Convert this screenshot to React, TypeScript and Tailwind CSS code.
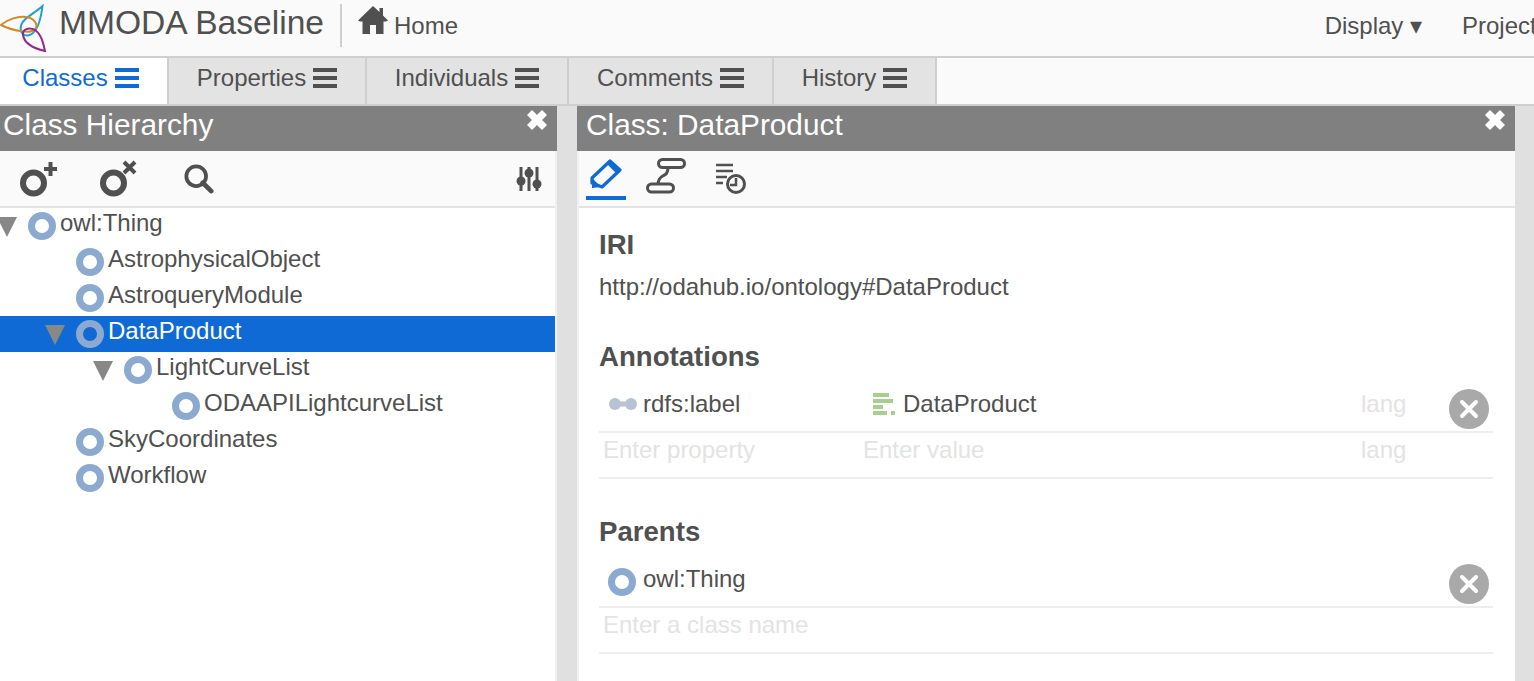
import React from "react";

function Logo() {
	return (
		<svg width="48" height="48" viewBox="0 0 48 48" fill="none" className="shrink-0">
			<path d="M42.5 2C41 14 38 30 28 31.5C20 32 18 22 25 15.5C30 11 37 7 42.5 2Z" stroke="#1e9fd2" strokeWidth="2" />
			<path d="M1 21C8 15 18 12 26 13C34 14 38 20 36 24C33 29 26 28 20 27C12 26 7 24 1 21Z" stroke="#d08a2a" strokeWidth="2" />
			<path d="M45 47C43 38 41 30 35 26C29 23 22 25 23 31C24 38 32 44 45 47Z" stroke="#93278f" strokeWidth="2" />
		</svg>
	);
}

function HomeIcon() {
	return (
		<svg width="30" height="30" viewBox="0 0 30 30" className="fill-[#505050]">
			<path d="M15 1L0 15.5L2 16.5H4.5V29H12V20H18V29H25.5V16.5H28L30 15.5L25 10.5V3H21.5V7L15 1Z" />
		</svg>
	);
}

function Bars() {
	return (
		<span className="ml-[7px] flex h-[20px] w-[24px] flex-col justify-between">
			<span className="h-[4px] bg-current" />
			<span className="h-[4px] bg-current" />
			<span className="h-[4px] bg-current" />
		</span>
	);
}

function Tab({ label, width, active }: { label: string; width: string; active?: boolean }) {
	return (
		<div
			className={
				active
					? `flex h-full items-center justify-center border-r-2 border-[#cfcfcf] bg-white pb-[6px] pr-[6px] text-[#0f6ad6] ${width}`
					: `flex h-full items-center justify-center border-r-2 border-[#cfcfcf] bg-[#e3e3e3] pb-[6px] text-[#505050] ${width}`
			}
		>
			{label}
			<Bars />
		</div>
	);
}

function CloseMark() {
	return (
		<svg width="20" height="20" viewBox="0 0 20 20" className="fill-white">
			<path d="M1 5L5 1L10 6L15 1L19 5L14 10L19 15L15 19L10 14L5 19L1 15L6 10Z" stroke="#fff" strokeWidth="1.5" strokeLinejoin="round" />
		</svg>
	);
}

function PanelHeading({ title, inset }: { title: string; inset: string }) {
	return (
		<div className={`flex h-[45px] items-start justify-between bg-[#808080] pr-[10px] pt-[1px] text-[29.8px] leading-[36px] text-white ${inset}`}>
			<span>{title}</span>
			<span className="pt-[3px]">
				<CloseMark />
			</span>
		</div>
	);
}

function ClassDot({ selected }: { selected?: boolean }) {
	return (
		<span
			className={
				selected
					? "block h-[28px] w-[28px] shrink-0 rounded-full border-[7px] border-[#8ca9d0] bg-[#0f6ad6]"
					: "block h-[28px] w-[28px] shrink-0 rounded-full border-[7px] border-[#8ca9d0] bg-white"
			}
		/>
	);
}

function Caret() {
	return (
		<svg width="20" height="20" viewBox="0 0 20 20" className="shrink-0 fill-[#888888]">
			<path d="M0 0H20L10 20Z" />
		</svg>
	);
}

type TreeRowProps = {
	label: string;
	indent: string;
	caret?: boolean;
	selected?: boolean;
};

function TreeRow({ label, indent, caret, selected }: TreeRowProps) {
	return (
		<div
			className={
				selected
					? `flex h-[36px] items-center bg-[#0f6ad6] text-white ${indent}`
					: `flex h-[36px] items-center text-[#505050] ${indent}`
			}
		>
			{caret && (
				<span className="mr-[11px] mt-[2px] block">
					<Caret />
				</span>
			)}
			<ClassDot selected={selected} />
			<span className="mb-[6px] ml-[4px] whitespace-nowrap">{label}</span>
		</div>
	);
}

function ClassToolIcon({ kind }: { kind: "add" | "remove" }) {
	return (
		<svg width="38" height="38" viewBox="0 0 38 38" fill="none" stroke="#505050">
			<circle cx="13.5" cy="23" r="10.5" strokeWidth="6" />
			{kind === "add" ? (
				<path d="M30.5 2V16M24 9H37" strokeWidth="4" />
			) : (
				<path d="M24 2L35 13M35 2L24 13" strokeWidth="4" />
			)}
		</svg>
	);
}

function RemoveButton() {
	return (
		<span className="flex h-[40px] w-[40px] items-center justify-center rounded-full bg-[#a9a9a9]">
			<svg width="22" height="22" viewBox="0 0 22 22" fill="none" stroke="#fff" strokeWidth="4" strokeLinecap="round">
				<path d="M4 4L18 18M18 4L4 18" />
			</svg>
		</span>
	);
}

function PropertyIcon() {
	return (
		<svg width="28" height="14" viewBox="0 0 28 14" className="fill-[#b8c2d2]">
			<circle cx="6" cy="7" r="6" />
			<circle cx="22" cy="7" r="6" />
			<rect x="6" y="4.5" width="16" height="5" />
		</svg>
	);
}

function LiteralIcon() {
	return (
		<svg width="22" height="22" viewBox="0 0 22 22" className="fill-[#a6cf91]">
			<rect x="0" y="0" width="16" height="4" />
			<rect x="0" y="6" width="20" height="4" />
			<rect x="0" y="12" width="10" height="4" />
			<rect x="0" y="18" width="14" height="4" />
			<rect x="18" y="18" width="4" height="4" />
		</svg>
	);
}

export default function App() {
	return (
		<div className="h-[681px] w-[1534px] overflow-hidden bg-white font-['Liberation_Sans',Arial,sans-serif] text-[24px] text-[#505050]">
			{/* Navbar */}
			<div className="flex h-[58px] items-center justify-between overflow-hidden border-b-2 border-[#cfcfcf] bg-[#fafafa]">
				<div className="flex h-full items-center">
					<Logo />
					<span className="ml-[11px] mb-[10px] text-[33.6px] leading-[48px]">MMODA Baseline</span>
					<span className="ml-[16px] mb-[6px] h-[43px] w-[2px] bg-[#cfcfcf]" />
					<span className="mb-[17px] ml-[16px]">
						<HomeIcon />
					</span>
					<span className="mb-[4px] ml-[6px]">Home</span>
				</div>
				<div className="mb-[4px] flex items-center whitespace-nowrap">
					<span>Display ▾</span>
					<span className="ml-[40px] w-[72px] overflow-hidden">Project</span>
				</div>
			</div>

			{/* Tabs */}
			<div className="flex h-[48px] border-b-2 border-[#cfcfcf] bg-[#fafafa]">
				<Tab label="Classes" width="w-[169px]" active />
				<Tab label="Properties" width="w-[198px]" />
				<Tab label="Individuals" width="w-[202px]" />
				<Tab label="Comments" width="w-[205px]" />
				<Tab label="History" width="w-[163px]" />
			</div>

			<div className="flex h-[575px]">
				{/* Class hierarchy */}
				<div className="w-[557px] shrink-0">
					<PanelHeading title="Class Hierarchy" inset="pl-[3px]" />
					<div className="h-[530px] border-r-2 border-[#f0f0f0]">
						<div className="flex h-[57px] items-center justify-between border-b-2 border-[#e3e3e3] bg-[#fafafa] pl-[20px] pr-[13px]">
							<div className="flex items-center">
								<ClassToolIcon kind="add" />
								<span className="ml-[42px]">
									<ClassToolIcon kind="remove" />
								</span>
								<svg width="30" height="30" viewBox="0 0 32 32" fill="none" stroke="#505050" className="ml-[46px] mt-[1px]">
									<circle cx="13" cy="13" r="10.5" strokeWidth="4" />
									<path d="M20 20L29 29" strokeWidth="5" strokeLinecap="round" />
								</svg>
							</div>
							<svg width="26" height="26" viewBox="0 0 26 26" className="fill-[#505050]">
								<rect x="3.5" y="1" width="3" height="24" />
								<rect x="11.5" y="1" width="3" height="24" />
								<rect x="19.5" y="1" width="3" height="24" />
								<circle cx="5" cy="15" r="4.5" />
								<circle cx="13" cy="7" r="4.5" />
								<circle cx="21" cy="18" r="4.5" />
							</svg>
						</div>
						<div>
							<TreeRow label="owl:Thing" indent="-ml-[3px]" caret />
							<TreeRow label="AstrophysicalObject" indent="pl-[76px]" />
							<TreeRow label="AstroqueryModule" indent="pl-[76px]" />
							<TreeRow label="DataProduct" indent="pl-[45px]" caret selected />
							<TreeRow label="LightCurveList" indent="pl-[93px]" caret />
							<TreeRow label="ODAAPILightcurveList" indent="pl-[172px]" />
							<TreeRow label="SkyCoordinates" indent="pl-[76px]" />
							<TreeRow label="Workflow" indent="pl-[76px]" />
						</div>
					</div>
				</div>

				{/* Splitter */}
				<div className="w-[20px] shrink-0 bg-[#e0e0e0]" />

				{/* Class details */}
				<div className="w-[938px] shrink-0">
					<PanelHeading title="Class: DataProduct" inset="pl-[9px]" />
					<div className="h-[530px] border-l-2 border-[#f0f0f0]">
						<div className="flex h-[57px] items-start border-b-2 border-[#e3e3e3] bg-[#fafafa] pl-[7px]">
							<div className="flex h-[49px] w-[40px] items-end justify-center border-b-[4px] border-[#0f6ad6] pb-[6px]">
								<svg width="32" height="32" viewBox="0 0 32 32" fill="none">
									<path d="M2 25L2 20L20 3L30 12L12 29Z" stroke="#0f6ad6" strokeWidth="3.2" strokeLinejoin="round" />
									<path d="M17 6L20 3L30 12L27 16Z" fill="#0f6ad6" />
									<path d="M2 20L11 29L2 30Z" fill="#0f6ad6" />
								</svg>
							</div>
							<svg width="40" height="36" viewBox="0 0 40 36" fill="none" stroke="#505050" strokeWidth="3" className="ml-[20px] mt-[7px]">
								<rect x="12.5" y="1.5" width="26" height="8" rx="4" />
								<rect x="1.5" y="26" width="26" height="8" rx="4" />
								<path d="M22 9.5C22 21 13 14 12 26" />
							</svg>
							<svg width="32" height="34" viewBox="0 0 32 34" fill="none" stroke="#505050" className="ml-[30px] mt-[12px]">
								<path d="M0 2H17M0 8H17M0 14H11M0 20H7" strokeWidth="2.5" />
								<circle cx="20" cy="21" r="8.5" strokeWidth="3" />
								<path d="M20 15V22H14" strokeWidth="2.5" />
							</svg>
						</div>

						<div className="px-[20px]">
							<h3 className="mt-[19px] text-[27.6px] font-bold leading-[36px]">IRI</h3>
							<p className="mt-[6px] leading-[36px] whitespace-nowrap">http://odahub.io/ontology#DataProduct</p>

							<h3 className="mt-[34px] text-[27.6px] font-bold leading-[36px]">Annotations</h3>
							<div className="mt-[2px] flex h-[56px] w-[894px] items-center border-b-2 border-[#eeeeee] pl-[10px]">
								<PropertyIcon />
								<span className="ml-[6px] w-[230px]">rdfs:label</span>
								<LiteralIcon />
								<span className="ml-[8px] w-[458px]">DataProduct</span>
								<span className="text-[#e3e3e3]">lang</span>
								<span className="ml-[43px] mt-[10px]">
									<RemoveButton />
								</span>
							</div>
							<div className="flex h-[46px] w-[894px] items-center border-b-2 border-[#eeeeee] pb-[10px] pl-[4px] text-[#e3e3e3]">
								<span className="w-[260px]">Enter property</span>
								<span className="w-[498px]">Enter value</span>
								<span>lang</span>
							</div>

							<h3 className="mt-[35px] text-[27.6px] font-bold leading-[36px]">Parents</h3>
							<div className="mt-[2px] flex h-[56px] w-[894px] items-center border-b-2 border-[#eeeeee] pl-[9px]">
								<span className="mt-[6px]">
									<ClassDot />
								</span>
								<span className="ml-[7px] flex-1">owl:Thing</span>
								<span className="mr-[4px] mt-[10px]">
									<RemoveButton />
								</span>
							</div>
							<div className="flex h-[46px] w-[894px] items-center border-b-2 border-[#eeeeee] pb-[11px] pl-[4px] text-[#e3e3e3]">
								Enter a class name
							</div>
						</div>
					</div>
				</div>

				{/* Right gutter */}
				<div className="flex-1 bg-[#e0e0e0]" />
			</div>
		</div>
	);
}
